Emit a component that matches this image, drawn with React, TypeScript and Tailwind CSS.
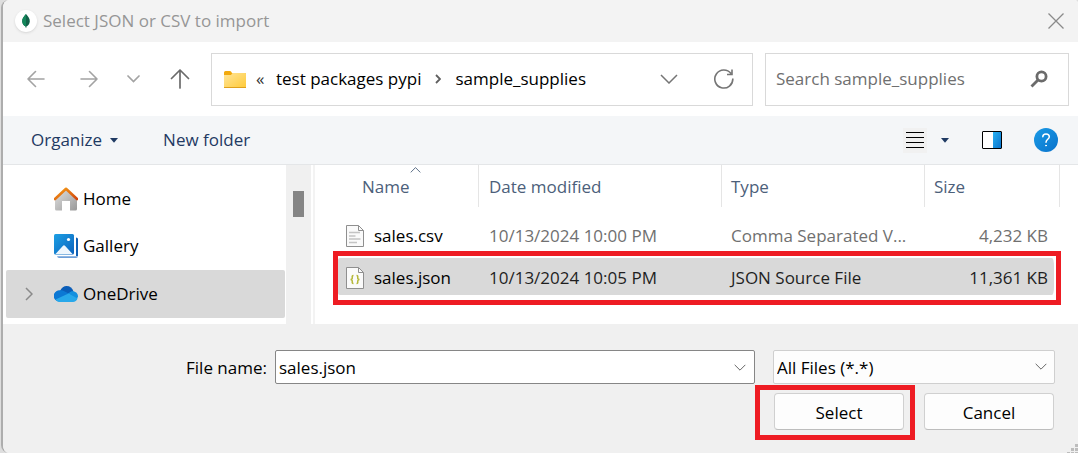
import React from "react";

type FileRow = {
  name: string;
  modified: string;
  type: string;
  size: string;
  kind: "text" | "json";
  selected?: boolean;
};

const files: FileRow[] = [
  { name: "sales.csv", modified: "10/13/2024 10:00 PM", type: "Comma Separated V...", size: "4,232 KB", kind: "text" },
  { name: "sales.json", modified: "10/13/2024 10:05 PM", type: "JSON Source File", size: "11,361 KB", kind: "json", selected: true },
];

function Chevron({ className }: { className: string }) {
  return (
    <svg viewBox="0 0 18 10" className={className} fill="none" stroke="currentColor" strokeWidth="1.500" aria-hidden="true">
      <path d="M1 1l8 8 8-8" />
    </svg>
  );
}

function LeafIcon() {
  return (
    <span className="flex size-[22px] shrink-0 items-center justify-center rounded-full bg-white shadow-sm">
      <svg viewBox="0 0 8 14" className="h-[14px] w-2" aria-hidden="true">
        <path d="M4 0C6 2.300 8 4.300 7.800 7.500 7.600 10 6 11.700 4.400 12.600L4.200 14H3.800L3.600 12.600C2 11.700.4 10 .2 7.500 0 4.300 2 2.300 4 0z" fill="#116149" />
        <path d="M4 0C2 2.300 0 4.300.2 7.500.4 10 2 11.700 3.600 12.600L4 13z" fill="#13875b" />
      </svg>
    </span>
  );
}

function FolderIcon() {
  return (
    <svg viewBox="0 0 22 17" className="h-[17px] w-[22px] shrink-0" aria-hidden="true">
      <defs>
        <linearGradient id="folder" x1="0" y1="0" x2="1" y2="1">
          <stop offset="0" stopColor="#ffe59a" />
          <stop offset="1" stopColor="#ffca38" />
        </linearGradient>
      </defs>
      <path d="M0 1.500Q0 0 1.500 0H6Q7 0 8 2H21Q22 2 22 3V8H0z" fill="#f2a90d" />
      <path d="M0 4H7L8.500 2H21.500Q22 2 22 3V17H0z" fill="url(#folder)" />
      <path d="M0 16.500H22" stroke="#dfa01d" />
    </svg>
  );
}

function HomeIcon() {
  return (
    <svg viewBox="0 0 24 24" className="size-6 shrink-0" aria-hidden="true">
      <defs>
        <linearGradient id="wall" x1="0" y1="0" x2="1" y2="1">
          <stop offset="0" stopColor="#e2e2e2" />
          <stop offset="1" stopColor="#989898" />
        </linearGradient>
        <linearGradient id="roof" x1="0" y1="0" x2="1" y2="1">
          <stop offset="0" stopColor="#f7a11a" />
          <stop offset="1" stopColor="#d1440c" />
        </linearGradient>
      </defs>
      <path d="M1 11L12 2 23 11V22Q23 23.500 21.500 23.500H16V14H8V23.500H2.500Q1 23.500 1 22z" fill="url(#wall)" />
      <path d="M1 12L12 1.800 23 12" fill="none" stroke="url(#roof)" strokeWidth="2.600" strokeLinecap="round" strokeLinejoin="round" />
    </svg>
  );
}

function GalleryIcon() {
  return (
    <svg viewBox="0 0 24 24" className="size-6 shrink-0" aria-hidden="true">
      <defs>
        <linearGradient id="photo" x1="0" y1="0" x2="1" y2="1">
          <stop offset="0" stopColor="#1ca0e4" />
          <stop offset="1" stopColor="#0c62bd" />
        </linearGradient>
      </defs>
      <path d="M22 3.500Q24 3.500 24 5V22H22z" fill="#0f5fb4" />
      <path d="M3 22.200H24Q24 24 22 24H5Q3.500 24 3 22.200z" fill="#6e9fd8" />
      <rect width="20" height="20.500" rx="1.500" fill="url(#photo)" />
      <path d="M1.500 20L8.800 12Q10 10.500 11.200 12L18.500 20Z" fill="#eef6fd" />
      <circle cx="14.500" cy="5.500" r="1.600" fill="#fff" />
    </svg>
  );
}

function CloudIcon() {
  return (
    <svg viewBox="0 0 24 16" className="h-4 w-6 shrink-0" aria-hidden="true">
      <path d="M6 5C7.500 1.500 10 0 12.500 0 16 0 18.500 2 19.500 5.500L13 9z" fill="#0a5db8" />
      <path d="M5 15.500A5.200 5.200 0 0 1 5.500 4.500C8 3.500 10 5 15 7.800L6 13z" fill="#0c78d4" />
      <path d="M1.500 13.500A5.500 5.500 0 0 1 5.500 4.500L12 8z" fill="#0c78d4" />
      <path d="M14 7.500L17.500 5.300C21.500 4.800 24 7.500 24 10.500L22.500 14z" fill="#1490df" />
      <path d="M1.500 13.500L14.500 7.500 23.500 12.500C22.800 14.800 21 16 19 16H5.500C3.800 16 2.300 15 1.500 13.500z" fill="#28a8ea" />
    </svg>
  );
}

function FileIcon({ kind }: { kind: FileRow["kind"] }) {
  return (
    <svg viewBox="0 0 18 22" className="h-[22px] w-[18px] shrink-0" fill="none" aria-hidden="true">
      <path d="M.5.5H12.500L17.500 5.500V21.500H.5z" fill="#fafafa" stroke="#8f8f8f" />
      <path d="M12.500.5V5.500H17.500" stroke="#8f8f8f" />
      {kind === "text" ? (
        <path d="M3 7.500H14M3 11H9.500M3 14H14.500M3 17.500H11" stroke="#c4c4c4" strokeWidth="1.400" />
      ) : (
        <path d="M7.500 8.500C5.500 8.500 6.500 10.500 6.200 11.500 6 12.300 5 12.500 4.500 12.500 5 12.500 6 12.700 6.200 13.500 6.500 14.500 5.500 16.500 7.500 16.500M10.500 8.500C12.500 8.500 11.500 10.500 11.800 11.500 12 12.300 13 12.500 13.500 12.500 13 12.500 12 12.700 11.800 13.500 11.500 14.500 12.500 16.500 10.500 16.500" stroke="#b5b83a" strokeWidth="1.500" />
      )}
    </svg>
  );
}

function TitleBar() {
  return (
    <header className="flex h-[42px] items-center gap-1.5 bg-[#f3f3f3] px-3.5 pl-3">
      <LeafIcon />
      <h1 className="flex-1 text-[#969696]">Select JSON or CSV to import</h1>
      <button aria-label="Close" className="text-[#8a8a8a]">
        <svg viewBox="0 0 16 16" className="size-4" fill="none" stroke="currentColor" strokeWidth="1.300">
          <path d="M.5.5l15 15M15.500.5l-15 15" />
        </svg>
      </button>
    </header>
  );
}

function NavigationBar() {
  return (
    <nav className="flex h-[74px] items-center bg-white pr-[9px] pl-6">
      <div className="flex w-[184px] shrink-0 items-center">
        <button aria-label="Back" className="mr-[35px] text-[#a3a3a3]">
          <svg viewBox="0 0 18 18" className="size-[18px]" fill="none" stroke="currentColor" strokeWidth="1.600" strokeLinecap="round" strokeLinejoin="round">
            <path d="M17 9H1M8.500 1.500L1 9l7.500 7.500" />
          </svg>
        </button>
        <button aria-label="Forward" className="mr-[29px] text-[#a3a3a3]">
          <svg viewBox="0 0 18 18" className="size-[18px]" fill="none" stroke="currentColor" strokeWidth="1.600" strokeLinecap="round" strokeLinejoin="round">
            <path d="M1 9h16M9.500 1.500L17 9l-7.500 7.500" />
          </svg>
        </button>
        <button aria-label="Recent locations" className="mr-[30px] text-[#a3a3a3]">
          <svg viewBox="0 0 13 8" className="h-2 w-[13px]" fill="none" stroke="currentColor" strokeWidth="1.700" strokeLinecap="round">
            <path d="M1 1l5.500 5.500L12 1" />
          </svg>
        </button>
        <button aria-label="Up" className="text-[#6b6b6b]">
          <svg viewBox="0 0 20 20" className="size-5" fill="none" stroke="currentColor" strokeWidth="1.700" strokeLinecap="round" strokeLinejoin="round">
            <path d="M10 19V1M1.500 9.500L10 1l8.500 8.500" />
          </svg>
        </button>
      </div>
      <div className="flex h-[53px] min-w-0 flex-1 items-center border border-[#d9d9d9] pr-[18px] pl-3 text-black">
        <FolderIcon />
        <span className="ml-2.5 w-5 text-[#333]">«</span>
        <a href="#packages" className="whitespace-nowrap">test packages pypi</a>
        <svg viewBox="0 0 6 10" className="mx-3.5 h-2.5 w-1.5 shrink-0" fill="none" stroke="#5f5f5f" strokeWidth="1.800" aria-hidden="true">
          <path d="M1 1l4 4-4 4" />
        </svg>
        <a href="#supplies" className="min-w-0 flex-1 truncate">sample_supplies</a>
        <button aria-label="Previous locations" className="mr-9 text-[#757575]">
          <Chevron className="h-[10px] w-[18px]" />
        </button>
        <button aria-label="Refresh" className="text-[#757575]">
          <svg viewBox="0 0 20 20" className="size-5" fill="none" stroke="currentColor" strokeWidth="1.600">
            <path d="M18.800 9.500A9 9 0 1 1 17 4.600M18 .5V5.500H13" />
          </svg>
        </button>
      </div>
      <label className="ml-3 flex h-[53px] w-[304px] items-center border border-[#d9d9d9] pr-5 pl-2.5">
        <input type="search" aria-label="Search sample_supplies" placeholder="Search sample_supplies" className="min-w-0 flex-1 bg-transparent outline-none placeholder:text-[#6f6f6f]" />
        <svg viewBox="0 0 18 18" className="size-[18px]" fill="none" stroke="#6b6b6b" aria-hidden="true">
          <circle cx="11.500" cy="6.500" r="4.600" strokeWidth="2.800" />
          <path d="M8 10L1.500 16.500" strokeWidth="2.800" />
        </svg>
      </label>
    </nav>
  );
}

function CommandBar() {
  return (
    <div className="flex h-[49px] items-center border-b border-[#e4e6e8] bg-[#f4f6f8] pr-5 pl-7 text-[#1f3a63]">
      <button className="mr-[45px] flex items-center gap-2">
        Organize
        <svg viewBox="0 0 8 5" className="h-[5px] w-2" fill="currentColor" aria-hidden="true">
          <path d="M0 0h8L4 4.800z" />
        </svg>
      </button>
      <button>New folder</button>
      <span className="flex-1" />
      <button aria-label="Change view" className="mr-3.5 bg-[#f1f1f1] px-[3px] py-1">
        <svg viewBox="0 0 18 17" className="h-[17px] w-[18px]" fill="none" stroke="#000">
          <path d="M0 .5h18M0 5.500h18M0 10.500h18M0 15.500h18" />
        </svg>
      </button>
      <button aria-label="More view options" className="mr-[33px]">
        <svg viewBox="0 0 8 5" className="h-[5px] w-2" fill="currentColor">
          <path d="M0 0h8L4 4.800z" />
        </svg>
      </button>
      <button aria-label="Show the preview pane" className="mr-8">
        <svg viewBox="0 0 20 18" className="h-[18px] w-5">
          <defs>
            <linearGradient id="pane" x1="0" y1="0" x2="1" y2="1">
              <stop offset="0" stopColor="#27b0f2" />
              <stop offset="1" stopColor="#0b74cc" />
            </linearGradient>
          </defs>
          <rect x=".5" y=".5" width="19" height="17" rx=".5" fill="#fff" stroke="#000" />
          <path d="M11 1H19V17H11z" fill="url(#pane)" />
        </svg>
      </button>
      <button aria-label="Help" className="flex size-6 items-center justify-center rounded-full bg-linear-to-br from-[#1b9be6] to-[#0a72cb]">
        <svg viewBox="0 0 10 14" className="h-[14px] w-2.5" fill="none" stroke="#fff" strokeWidth="1.500" strokeLinecap="round">
          <path d="M1.800 3.800C1.800 2 3.200 1 5 1s3.300 1.100 3.300 2.800C8.300 6.300 5 6.300 5 9.300" />
          <circle cx="5" cy="12.600" r=".5" fill="#fff" strokeWidth="1" />
        </svg>
      </button>
    </div>
  );
}

function Sidebar() {
  return (
    <aside className="flex w-[312px] shrink-0 border-r-2 border-[#f3f3f3]">
      <ul className="flex-1 pt-[9px] pr-px pb-1.5 pl-[3px] text-black">
        <li>
          <a href="#home" className="flex h-12 items-center gap-[5px] pt-0.5 pl-12"><HomeIcon />Home</a>
        </li>
        <li>
          <a href="#gallery" className="flex h-12 items-center gap-[5px] pl-12"><GalleryIcon />Gallery</a>
        </li>
        <li>
          <a href="#onedrive" className="flex h-12 items-center gap-[5px] rounded-xs bg-[#d9d9d9] pl-[19px]">
            <svg viewBox="0 0 8 14" className="mr-4 h-3.5 w-2" fill="none" stroke="#8a8a8a" strokeWidth="1.500" aria-hidden="true">
              <path d="M1 1l6 6-6 6" />
            </svg>
            <CloudIcon />OneDrive
          </a>
        </li>
      </ul>
      <div className="mr-0.5 flex w-[25px] justify-center bg-[#f0f0f0] pt-[26px]">
        <span className="h-[26px] w-[11px] bg-[#858585]" />
      </div>
    </aside>
  );
}

function FileTable() {
  return (
    <div className="min-w-0 flex-1 pr-[18px] pl-[23px]">
      <table className="w-full table-fixed border-separate border-spacing-0 text-left">
        <colgroup>
          <col className="w-[141px]" />
          <col className="w-[243px]" />
          <col />
          <col className="w-[135px]" />
        </colgroup>
        <thead className="text-[#4c607a]">
          <tr className="h-[42px]">
            <th aria-sort="ascending" className="relative border-r border-[#e5e5e5] pt-0.5 pl-6 font-normal">
              Name
              <Chevron className="absolute top-0.5 left-[72px] h-[6px] w-[11px] rotate-180" />
            </th>
            <th className="border-r border-[#e5e5e5] pt-0.5 pl-2.5 font-normal">Date modified</th>
            <th className="border-r border-[#e5e5e5] pt-0.5 pl-[9px] font-normal">Type</th>
            <th className="border-r border-[#e5e5e5] pt-0.5 pl-[9px] font-normal">Size</th>
          </tr>
        </thead>
        <tbody>
          {files.map((file) => (
            <tr
              key={file.name}
              className={file.selected ? "relative h-[37px] text-[#1f1f1f] [&>td]:bg-[#d9d9d9] [&>td]:pt-[3px]" : "h-[51px] text-[#707070] [&>td]:pt-1.5"}
            >
              <td className="rounded-l-xs pl-2">
                <span className="flex items-center gap-2.5 text-black">
                  <FileIcon kind={file.kind} />
                  {file.name}
                </span>
                {file.selected && (
                  <span className="pointer-events-none absolute -top-[7px] -right-px -bottom-2.5 -left-[5px] border-5 border-[#ee1c23]" />
                )}
              </td>
              <td className="pl-2.5 whitespace-nowrap">{file.modified}</td>
              <td className="pl-[9px] whitespace-nowrap">{file.type}</td>
              <td className="rounded-r-lg border-r-[6px] border-transparent bg-clip-padding pr-1.5 text-right">{file.size}</td>
            </tr>
          ))}
        </tbody>
      </table>
    </div>
  );
}

function Footer() {
  return (
    <footer className="relative flex-1 bg-[#f0f0f0] pt-[26px] pr-[23px] pb-[23px] text-black">
      <div className="flex items-center">
        <label htmlFor="file-name" className="w-[264px] shrink-0 pt-0.5 text-right">File name:</label>
        <div className="ml-2 flex h-[34px] min-w-0 flex-1 items-center rounded-xs border border-[#868686] bg-white pr-2">
          <input id="file-name" type="text" defaultValue="sales.json" className="min-w-0 flex-1 pt-0.5 pl-[3px] outline-none" />
          <button aria-label="Recent file names" className="text-[#666]">
            <Chevron className="h-[7px] w-3" />
          </button>
        </div>
        <div className="relative ml-[18px] w-[282px] shrink-0">
          <select aria-label="File type" className="block h-[34px] w-full appearance-none rounded-xs border border-[#cfcfcf] bg-[#fdfdfd] pt-0.5 pl-[3px]">
            <option>All Files (*.*)</option>
          </select>
          <Chevron className="pointer-events-none absolute top-[13px] right-2 h-[7px] w-3 text-[#666]" />
        </div>
      </div>
      <div className="mt-[9px] flex justify-end gap-5 pr-px">
        <div className="relative">
          <button className="h-[37px] w-[130px] rounded border border-[#d0d0d0] border-b-[#bdbdbd] bg-[#fdfdfd] pt-0.5">Select</button>
          <span className="pointer-events-none absolute -top-2 -right-[11px] -bottom-[10px] -left-[19px] border-5 border-[#ee1c23]" />
        </div>
        <button className="h-[37px] w-[130px] rounded border border-[#d0d0d0] border-b-[#bdbdbd] bg-[#fdfdfd] pt-0.5">Cancel</button>
      </div>
      <svg viewBox="0 0 11 9" className="absolute right-0 bottom-0 h-[9px] w-[11px]" fill="#bdbdbd" aria-hidden="true">
        <path d="M8 0h3v3H8zM4 4h3v3H4zM8 4h3v3H8zM0 8h3v1H0zM4 8h3v1H4zM8 8h3v1H8z" />
      </svg>
    </footer>
  );
}

export default function App() {
  return (
    <div className="flex min-h-screen flex-col border-l border-[#dedede] bg-[#dedede] font-['Open_Sans','Noto_Sans',sans-serif] text-[17px] leading-6">
      <main className="flex flex-1 flex-col overflow-hidden rounded-l-lg rounded-tr border-l-2 border-[#adadad] bg-white">
        <TitleBar />
        <NavigationBar />
        <CommandBar />
        <section className="flex bg-white">
          <Sidebar />
          <FileTable />
        </section>
        <Footer />
      </main>
    </div>
  );
}
